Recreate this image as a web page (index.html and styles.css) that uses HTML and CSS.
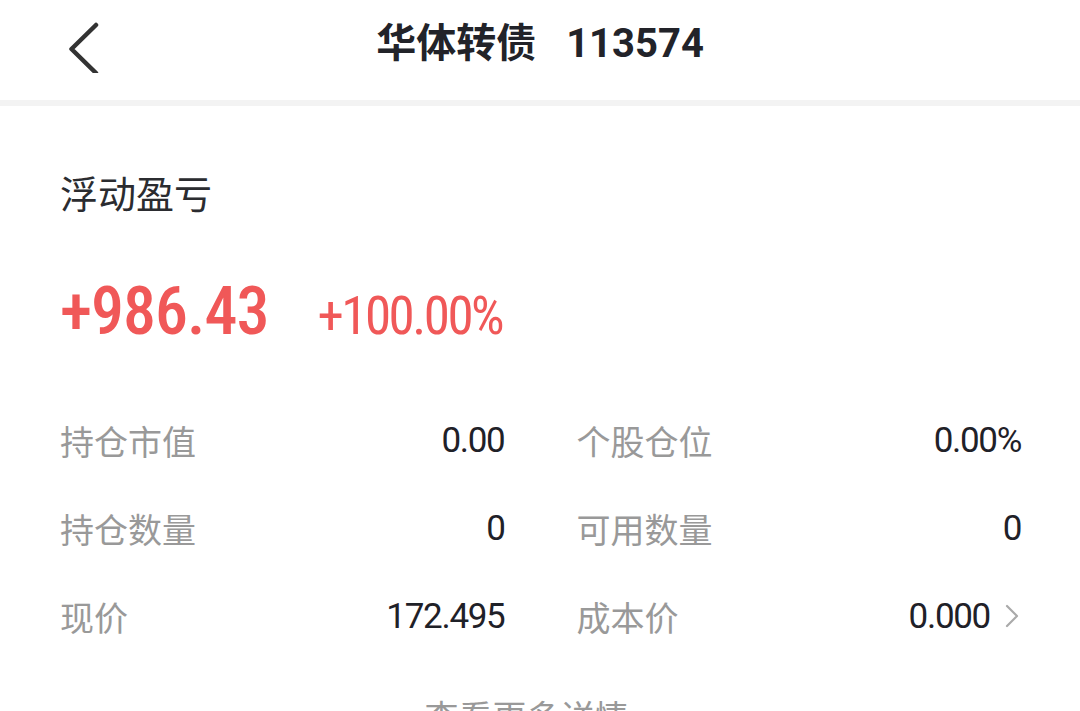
FILE: index.html
```html
<!DOCTYPE html>
<html lang="zh-CN">
<head>
    <meta charset="utf-8">
    <title>华体转债 113574</title>
    <link rel="stylesheet" href="styles.css">
</head>
<body>
    <header class="nav">
        <a href="#" class="back">
            <svg width="40" height="60" viewBox="0 0 40 60">
                <path d="M28 12 L3.5 36 L28 60" fill="none" stroke="#333" stroke-width="4.5" stroke-linecap="round" stroke-linejoin="round"/>
            </svg>
        </a>
        <h1 class="title">华体转债<span class="code">113574</span></h1>
        <div></div>
    </header>
    <div class="divider"></div>
    <main class="card">
        <h2 class="card-title">浮动盈亏</h2>
        <div class="profit">
            <span class="profit-amount">+986.43</span>
            <span class="profit-rate">+100.00%</span>
        </div>
        <div class="stats">
            <div class="stat"><span class="stat-label">持仓市值</span><span class="stat-value">0.00</span></div>
            <div class="stat"><span class="stat-label">个股仓位</span><span class="stat-value">0.00%</span></div>
            <div class="stat"><span class="stat-label">持仓数量</span><span class="stat-value">0</span></div>
            <div class="stat"><span class="stat-label">可用数量</span><span class="stat-value">0</span></div>
            <div class="stat"><span class="stat-label">现价</span><span class="stat-value">172.495</span></div>
            <div class="stat">
                <span class="stat-label">成本价</span>
                <span class="stat-value">0.000
                    <svg class="arrow" width="14" height="24" viewBox="0 0 14 24">
                        <path d="M2 2 L12 12 L2 22" fill="none" stroke="#aaa" stroke-width="2.2" stroke-linecap="round" stroke-linejoin="round"/>
                    </svg>
                </span>
            </div>
        </div>
        <a href="#" class="more">查看更多详情
            <svg width="16" height="12" viewBox="0 0 16 12">
                <path d="M2 3 L8 9 L14 3" fill="none" stroke="#999" stroke-width="2" stroke-linecap="round"/>
            </svg>
        </a>
    </main>
</body>
</html>
```

FILE: styles.css
```css
*{
    box-sizing: border-box;
}
body{
    margin: 0;
    padding: 0;
    background: #fff;
    font-family: Roboto, "Noto Sans CJK SC", sans-serif;
    color: #1f2128;
}
a{
    text-decoration: none;
    color: inherit;
}
/* top bar */
.nav{
    height: 100px;
    display: grid;
    grid-template-columns: 1fr auto 1fr;
    align-items: center;
}
.back{
    padding-left: 68px;
    display: flex;
    align-items: center;
    height: 100%;
    padding-bottom: 14px;
}
.title{
    margin: 0;
    font-size: 40px;
    font-weight: 700;
    color: #222329;
    line-height: 1;
    padding-bottom: 12px;
}
.code{
    margin-left: 30px;
}
.divider{
    height: 6px;
    background: #f3f3f3;
}
/* profit card */
.card{
    padding: 62px 59px 0 60px;
}
.card-title{
    margin: 0;
    font-size: 38px;
    font-weight: 400;
    color: #2b2c30;
    line-height: 54px;
}
.profit{
    display: flex;
    align-items: baseline;
    color: #f05858;
    margin-top: 52px;
    line-height: 76px;
    font-stretch: 82%;
}
.profit-amount{
    font-size: 66px;
    font-weight: 500;
    letter-spacing: -1px;
}
.profit-rate{
    margin-left: 49px;
    font-size: 53px;
    font-weight: 400;
    letter-spacing: -2.5px;
}
.stats{
    display: grid;
    grid-template-columns: 1fr 1fr;
    column-gap: 72px;
    margin-top: 42px;
}
.stat{
    height: 88px;
    display: flex;
    justify-content: space-between;
    align-items: center;
}
.stat-label{
    font-size: 34px;
    color: #999;
}
.stat-value{
    font-size: 35px;
    color: #1f2128;
    letter-spacing: -1.3px;
    display: flex;
    align-items: center;
}
.arrow{
    margin-left: 15px;
    margin-right: 2px;
}
.more{
    display: flex;
    justify-content: center;
    align-items: center;
    gap: 12px;
    margin-top: 34px;
    line-height: 48px;
    font-size: 34px;
    color: #999;
}
```
